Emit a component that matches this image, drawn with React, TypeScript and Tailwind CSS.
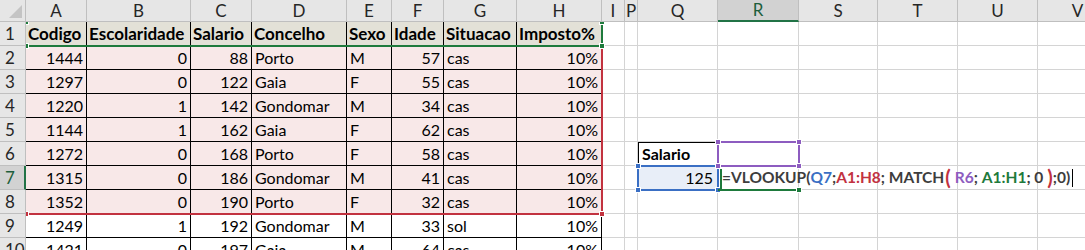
import React from 'react';

// column letters and pixel widths as laid out in the sheet
const cols = [
  { key: 'A', w: 61 },
  { key: 'B', w: 104 },
  { key: 'C', w: 61 },
  { key: 'D', w: 95 },
  { key: 'E', w: 45 },
  { key: 'F', w: 52 },
  { key: 'G', w: 73 },
  { key: 'H', w: 85 },
  { key: 'I', w: 23 },
  { key: 'P', w: 13 },
  { key: 'Q', w: 80 },
  { key: 'R', w: 81 },
  { key: 'S', w: 79 },
  { key: 'T', w: 80 },
  { key: 'U', w: 80 },
  { key: 'V', w: 80 },
];

const header = ['Codigo', 'Escolaridade', 'Salario', 'Concelho', 'Sexo', 'Idade', 'Situacao', 'Imposto%'];

const rows: (string | number)[][] = [
  [1444, 0, 88, 'Porto', 'M', 57, 'cas', '10%'],
  [1297, 0, 122, 'Gaia', 'F', 55, 'cas', '10%'],
  [1220, 1, 142, 'Gondomar', 'M', 34, 'cas', '10%'],
  [1144, 1, 162, 'Gaia', 'F', 62, 'cas', '10%'],
  [1272, 0, 168, 'Porto', 'F', 58, 'cas', '10%'],
  [1315, 0, 186, 'Gondomar', 'M', 41, 'cas', '10%'],
  [1352, 0, 190, 'Porto', 'F', 32, 'cas', '10%'],
  [1249, 1, 192, 'Gondomar', 'M', 33, 'sol', '10%'],
  [1421, 0, 197, 'Gaia', 'M', 64, 'cas', '10%'],
];

const rightAligned = [true, true, true, false, false, true, false, true];

const colX = (i: number) => 26 + cols.slice(0, i).reduce((s, c) => s + c.w, 0);
const rowY = (r: number) => 22 + (r - 1) * 24;

// coloured outline Excel draws around a range used in the formula being edited
function RangeBox({ x0, y0, x1, y1, color, corners }: { x0: number; y0: number; x1: number; y1: number; color: string; corners: [number, number][] }) {
  const left = x0 === 26 ? -2 : x0 - 27;
  const top = y0 === 22 ? -2 : y0 - 23;
  return (
    <>
      <div
        className="absolute border-2"
        style={{ left, top, width: x1 - 26 + 1 - left, height: y1 - 22 + 1 - top, borderColor: color }}
      />
      {corners.map(([x, y], i) => (
        <div
          key={i}
          className="absolute w-[6px] h-[6px] border border-white"
          style={{ left: x - 26 - 3, top: y - 22 - 3, backgroundColor: color }}
        />
      ))}
    </>
  );
}

export default function App() {
  return (
    <div className="w-[1085px] h-[250px] overflow-hidden bg-white text-black" style={{ fontFamily: 'Lato, "Liberation Sans", sans-serif' }}>
      <div className="relative">
        {/* column headers */}
        <div className="flex h-[22px]">
          <div className="relative w-[26px] shrink-0 bg-[#e6e6e6] border-r border-b border-[#bfbfbf]">
            <div className="absolute right-[3px] bottom-[3px] w-0 h-0 border-l-[13px] border-l-transparent border-b-[13px] border-b-[#c4c4c4]" />
          </div>
          {cols.map((c) => (
            <div
              key={c.key}
              className={
                c.key === 'R'
                  ? 'shrink-0 flex items-center justify-center bg-[#d2d2d2] border-r border-[#bfbfbf] border-b-2 border-b-[#217346] text-[#1d5e3b] text-[17px]'
                  : 'shrink-0 flex items-center justify-center bg-[#e6e6e6] border-r border-b border-[#bfbfbf] text-[#262626] text-[17px]'
              }
              style={{ width: c.w }}
            >
              {c.key}
            </div>
          ))}
        </div>

        {/* sheet body */}
        {Array.from({ length: 10 }, (_, ri) => {
          const r = ri + 1;
          const data = r === 1 ? header : rows[ri - 1];
          return (
            <div key={r} className="flex h-[24px]">
              <div
                className={
                  r === 7
                    ? 'w-[26px] shrink-0 flex items-center pl-[5px] bg-[#d2d2d2] border-r-2 border-r-[#217346] border-b border-[#bfbfbf] text-[#1d5e3b] text-[17px]'
                    : 'w-[26px] shrink-0 flex items-center pl-[5px] bg-[#e6e6e6] border-r border-b border-[#bfbfbf] text-[#262626] text-[17px]'
                }
              >
                {r}
              </div>
              {cols.map((c, ci) => {
                if (ci < 8) {
                  const v = data[ci];
                  const bg = r === 1 ? 'bg-[#e3e1d7]' : r <= 8 ? 'bg-[#f8e8e8]' : 'bg-white';
                  const align =
                    r === 1
                      ? 'justify-start pl-[2px] font-bold text-[17px]'
                      : rightAligned[ci]
                        ? 'justify-end pr-[3px] text-[16px]'
                        : 'justify-start pl-[3px] text-[16px]';
                  return (
                    <div
                      key={c.key}
                      className={`shrink-0 flex items-center whitespace-nowrap overflow-hidden border-r border-b border-black ${bg} ${align}`}
                      style={{ width: c.w }}
                    >
                      {v}
                    </div>
                  );
                }
                let extra = '';
                let content: React.ReactNode = null;
                if (c.key === 'Q' && r === 6) {
                  extra = 'border-t border-l border-t-black border-l-black font-bold justify-start pl-[3px]';
                  content = 'Salario';
                }
                if (c.key === 'Q' && r === 7) {
                  extra = 'bg-[#e8eef8] justify-end pr-[4px]';
                  content = 125;
                }
                if (c.key === 'R' && r === 7) {
                  extra = 'overflow-visible relative z-10 font-bold';
                  content = (
                    <span className="absolute left-[4px] top-0 h-full flex items-center whitespace-nowrap text-[15.5px] text-[#3d3d3d]">
                      =VLOOKUP(<span className="text-[#3a6fc4]">Q7</span>;<span className="text-[#c2323f]">A1:H8</span>; MATCH
                      <span className="text-[#c2323f] text-[20px] leading-none -mt-[2px] ml-[1px]">(</span>
                      <span className="text-[#8d5cc0] ml-[4px]">R6</span>;&nbsp;<span className="text-[#1e7a3c]">A1:H1</span>; 0
                      <span className="text-[#c2323f] text-[20px] leading-none -mt-[2px] ml-[4px]">)</span>;0)
                      <span className="ml-[2px] inline-block w-px h-[18px] bg-black" />
                    </span>
                  );
                }
                return (
                  <div
                    key={c.key}
                    className={`shrink-0 flex items-center text-[16px] border-r border-b border-[#d4d4d4] ${extra}`}
                    style={{ width: c.w }}
                  >
                    {content}
                  </div>
                );
              })}
            </div>
          );
        })}

        {/* range outlines drawn over the grid */}
        <div className="absolute left-[26px] top-[22px] right-0 bottom-0 overflow-hidden pointer-events-none z-20">
          <RangeBox x0={colX(0)} y0={rowY(1)} x1={colX(8)} y1={rowY(9)} color="#c2323f" corners={[[colX(0), rowY(9)], [colX(8), rowY(9)]]} />
          <RangeBox x0={colX(0)} y0={rowY(1)} x1={colX(8)} y1={rowY(2)} color="#1e7a3c" corners={[[colX(0), rowY(1)], [colX(8), rowY(1)], [colX(0), rowY(2)], [colX(8), rowY(2)]]} />
          <RangeBox x0={colX(10)} y0={rowY(7)} x1={colX(11)} y1={rowY(8)} color="#3a6fc4" corners={[[colX(10), rowY(7)], [colX(11), rowY(7)], [colX(10), rowY(8)], [colX(11), rowY(8)]]} />
          <RangeBox x0={colX(11)} y0={rowY(6)} x1={colX(12)} y1={rowY(7)} color="#8d5cc0" corners={[[colX(11), rowY(6)], [colX(12), rowY(6)], [colX(11), rowY(7)], [colX(12), rowY(7)]]} />
          {/* active cell edge */}
          <div className="absolute h-[2px] bg-[#1e7a3c]" style={{ left: colX(11) - 26, top: rowY(8) - 23, width: colX(12) - colX(11) }} />
          <div className="absolute w-[6px] h-[6px] bg-[#1e7a3c] border border-white" style={{ left: colX(12) - 29, top: rowY(8) - 25 }} />
          <div className="absolute w-[2px] bg-[#1e7a3c]" style={{ left: colX(11) - 26 + 2, top: rowY(7) - 22 + 3, height: 20 }} />
        </div>
      </div>
    </div>
  );
}
